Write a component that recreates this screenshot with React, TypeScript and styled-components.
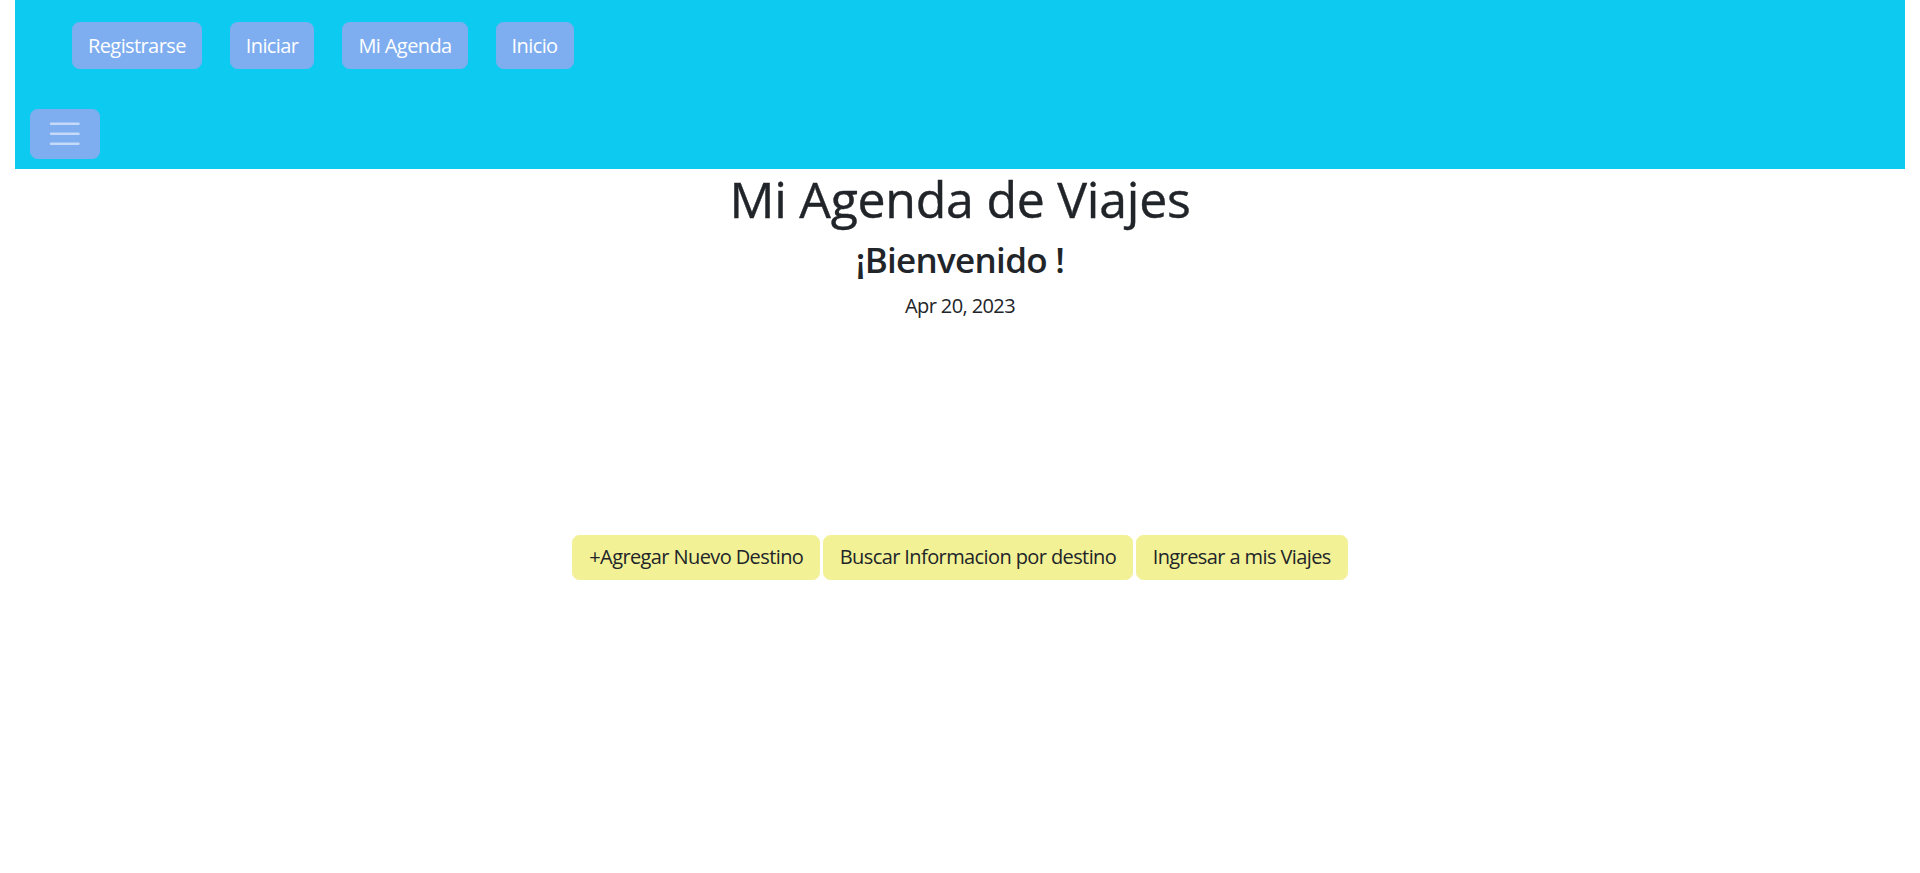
import React from "react";
import styled, { createGlobalStyle } from "styled-components";

const GlobalStyle = createGlobalStyle`
  html, body {
    margin: 0;
    padding: 0;
    background: #ffffff;
  }
  body {
    font-family: "Open Sans", "Noto Sans", "Liberation Sans", sans-serif;
    color: #212529;
    font-size: 20px;
    line-height: 1.5;
  }
`;

const Page = styled.div`
  display: flex;
  flex-direction: column;
  min-height: 873px;
`;

const Navbar = styled.nav`
  margin: 0 15px;
  background: #0dcaf0;
  display: flex;
  flex-direction: column;
  align-items: flex-start;
  padding: 22px 0 10px;
`;

const NavLinks = styled.div`
  display: flex;
  gap: 28px;
  padding-left: 57px;
`;

const NavButton = styled.a`
  display: inline-block;
  background: #7eadf0;
  color: #ffffff;
  border: 1.25px solid #7eadf0;
  border-radius: 7.5px;
  padding: 7.5px 15px;
  font-size: 20px;
  line-height: 30px;
  letter-spacing: -0.03em;
  text-decoration: none;
  cursor: pointer;
`;

const Toggler = styled.button`
  margin: 40px 0 0 15px;
  width: 70px;
  height: 50px;
  padding: 5px 15px;
  background: #7eadf0;
  border: 1.25px solid #7eadf0;
  border-radius: 7.5px;
  display: flex;
  align-items: center;
  justify-content: center;
  cursor: pointer;
`;

const Main = styled.main`
  display: flex;
  flex-direction: column;
  align-items: center;
  text-align: center;
`;

const Title = styled.h1`
  margin: 0 0 10px;
  font-size: 50px;
  font-weight: 500;
  line-height: 1.2;
  letter-spacing: -0.005em;
  -webkit-text-stroke: 0.4px #212529;
`;

const Subtitle = styled.h3`
  margin: 0 0 10px;
  font-size: 35px;
  font-weight: 600;
  line-height: 1.2;
  letter-spacing: -0.02em;
`;

const DateText = styled.p`
  margin: 0;
  font-size: 20px;
  line-height: 30px;
  letter-spacing: -0.03em;
`;

const Actions = styled.div`
  display: flex;
  gap: 2.5px;
  margin-top: 214px;
`;

const ActionButton = styled.button`
  background: #f2f196;
  color: #212529;
  border: 1.25px solid #f2f196;
  border-radius: 7.5px;
  padding: 6.25px 16px;
  font-family: inherit;
  font-size: 20px;
  line-height: 30px;
  letter-spacing: -0.03em;
  cursor: pointer;
`;

const MenuIcon = () => (
  <svg width="37.5" height="37.5" viewBox="0 0 30 30">
    <path
      stroke="rgba(255,255,255,0.55)"
      strokeLinecap="round"
      strokeMiterlimit="10"
      strokeWidth="2"
      d="M4 7h22M4 15h22M4 23h22"
    />
  </svg>
);

const links = ["Registrarse", "Iniciar", "Mi Agenda", "Inicio"];
const actions = ["+Agregar Nuevo Destino", "Buscar Informacion por destino", "Ingresar a mis Viajes"];

export default function App() {
  return (
    <Page>
      <GlobalStyle />
      <Navbar>
        <NavLinks>
          {links.map((l) => (
            <NavButton key={l}>{l}</NavButton>
          ))}
        </NavLinks>
        <Toggler aria-label="menu">
          <MenuIcon />
        </Toggler>
      </Navbar>
      <Main>
        <Title>Mi Agenda de Viajes</Title>
        <Subtitle>¡Bienvenido !</Subtitle>
        <DateText>Apr 20, 2023</DateText>
        <Actions>
          {actions.map((a) => (
            <ActionButton key={a}>{a}</ActionButton>
          ))}
        </Actions>
      </Main>
    </Page>
  );
}
